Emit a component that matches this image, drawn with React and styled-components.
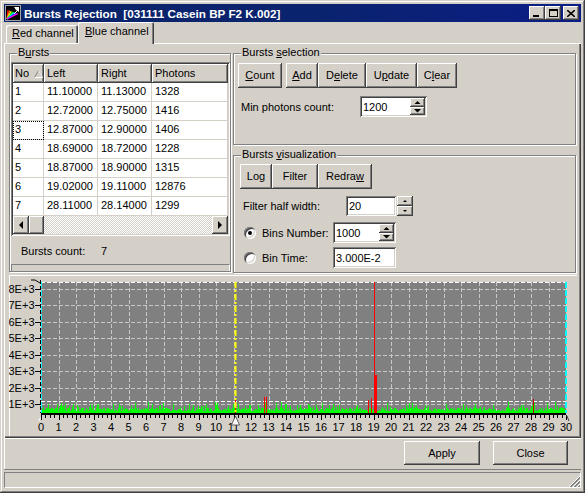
import React from "react";
import styled, { createGlobalStyle, css } from "styled-components";

const GlobalStyle = createGlobalStyle`
  html, body {
    margin: 0;
    padding: 0;
    background: #d4d0c8;
  }
  body {
    font-family: "Liberation Sans", Arial, sans-serif;
    font-size: 11px;
    color: #000;
  }
  * {
    box-sizing: border-box;
  }
`;

const raised = css`
  box-shadow: inset -1px -1px #404040, inset 1px 1px #fff, inset -2px -2px #808080;
`;

const sunken = css`
  box-shadow: inset 1px 1px #808080, inset -1px -1px #fff, inset 2px 2px #404040,
    inset -2px -2px #d4d0c8;
`;

const ROWS = [
  ["1", "11.10000", "11.13000", "1328"],
  ["2", "12.72000", "12.75000", "1416"],
  ["3", "12.87000", "12.90000", "1406"],
  ["4", "18.69000", "18.72000", "1228"],
  ["5", "18.87000", "18.90000", "1315"],
  ["6", "19.02000", "19.11000", "12876"],
  ["7", "28.11000", "28.14000", "1299"],
];

const COLS = [31, 54, 54, 76];

/* ---------- window chrome ---------- */

const Window = styled.div`
  width: 585px;
  height: 493px;
  padding: 4px;
  background: #d4d0c8;
  box-shadow: inset -1px -1px #404040, inset 1px 1px #d4d0c8, inset -2px -2px #808080,
    inset 2px 2px #fff;
  display: flex;
  flex-direction: column;
`;

const TitleBar = styled.div`
  height: 18px;
  flex: none;
  display: flex;
  align-items: center;
  padding: 0 2px 0 1px;
  background: linear-gradient(90deg, #0a246a 0%, #0a236e 55%, #0b1d86 100%);
`;

const Title = styled.span`
  flex: 1;
  margin-left: 3px;
  color: #fff;
  font-weight: bold;
  font-size: 11.7px;
  white-space: pre;
`;

const CaptionButton = styled.div`
  width: 16px;
  height: 14px;
  margin-left: ${(p) => (p.$gap ? "2px" : "0")};
  background: #d4d0c8;
  ${raised};
  display: flex;
  align-items: center;
  justify-content: center;
`;

const TabStrip = styled.div`
  height: 21px;
  flex: none;
  display: flex;
  align-items: flex-end;
  padding-left: 2px;
  position: relative;
  z-index: 1;
`;

const Tab = styled.div`
  width: ${(p) => p.$width}px;
  height: ${(p) => (p.$active ? 22 : 18)}px;
  margin-bottom: ${(p) => (p.$active ? "-1px" : "0")};
  padding-left: ${(p) => (p.$active ? 7 : 6)}px;
  padding-top: ${(p) => (p.$active ? 3 : 2)}px;
  background: #d4d0c8;
  border-radius: 2px 2px 0 0;
  box-shadow: inset 1px 1px #fff, inset -1px 0 #404040, inset -2px 0 #808080;
  line-height: 13px;
`;

const Sheet = styled.div`
  height: 395px;
  flex: none;
  padding: 10px 4px 2px 5px;
  box-shadow: inset 1px 1px #fff, inset -1px -1px #404040, inset -2px -2px #808080;
  display: flex;
  flex-direction: column;
`;

const TopRow = styled.div`
  display: flex;
  align-items: flex-start;
  gap: 2px;
  height: 220px;
`;

const RightCol = styled.div`
  display: flex;
  flex-direction: column;
  gap: 10px;
`;

/* ---------- group boxes ---------- */

const Group = styled.div`
  position: relative;
  width: ${(p) => p.$width}px;
  height: ${(p) => p.$height}px;
  border: 1px solid #808080;
  box-shadow: inset 1px 1px #fff, 1px 1px #fff;
  padding: ${(p) => p.$pad};
  display: flex;
  flex-direction: column;
`;

const Caption = styled.span`
  position: absolute;
  top: -8px;
  left: 7px;
  padding: 0 1px;
  line-height: 13px;
  background: #d4d0c8;
`;

/* ---------- list view ---------- */

const ListView = styled.div`
  width: 219px;
  height: 174px;
  padding: 2px;
  background: #fff;
  ${sunken};
  display: flex;
  flex-direction: column;
`;

const HeaderRow = styled.div`
  display: flex;
  height: 19px;
  flex: none;
`;

const HeaderCell = styled.div`
  width: ${(p) => p.$w}px;
  background: #d4d0c8;
  ${raised};
  padding-left: ${(p) => (p.$first ? 2 : 3)}px;
  display: flex;
  align-items: center;
  gap: 5px;
  line-height: 13px;
`;

const Row = styled.div`
  display: flex;
  height: 19px;
  flex: none;
`;

const Cell = styled.div`
  width: ${(p) => p.$w}px;
  border-bottom: 1px solid #d4d0c8;
  border-right: 1px solid #d4d0c8;
  padding-left: ${(p) => (p.$first ? 2 : 3)}px;
  padding-top: 2px;
  line-height: 13px;
  ${(p) =>
    p.$focus &&
    css`
      outline: 1px dotted #000;
      outline-offset: -1px;
    `}
`;

const HScroll = styled.div`
  height: 18px;
  flex: none;
  display: flex;
  background: repeating-conic-gradient(#fff 0 25%, #d4d0c8 0 50%) 0 0 / 2px 2px;
`;

const ScrollBtn = styled.div`
  width: ${(p) => p.$w || 16}px;
  height: 100%;
  background: #d4d0c8;
  ${raised};
  margin-left: ${(p) => (p.$push ? "auto" : "0")};
  display: flex;
  align-items: center;
  justify-content: center;
`;

const CountRow = styled.div`
  height: 28px;
  display: flex;
  align-items: center;
  padding: 1px 0 0 10px;
`;

const CountLabel = styled.span`
  width: 80px;
`;

const Strip = styled.div`
  width: 219px;
  height: 7px;
  border-top: 1px solid #808080;
  border-left: 1px solid #808080;
  border-right: 1px solid #fff;
`;

/* ---------- buttons and fields ---------- */

const ButtonRow = styled.div`
  display: flex;
  height: 25px;
`;

const Button = styled.div`
  width: ${(p) => p.$w}px;
  height: ${(p) => p.$h || 25}px;
  margin-right: ${(p) => p.$mr || 0}px;
  background: #d4d0c8;
  ${raised};
  display: flex;
  align-items: center;
  justify-content: center;
  padding-bottom: 1px;
`;

const FieldRow = styled.div`
  display: flex;
  align-items: center;
  height: ${(p) => p.$h || 21}px;
  margin-top: ${(p) => p.$mt}px;
  padding-left: ${(p) => p.$pl || 0}px;
`;

const FieldLabel = styled.span`
  width: ${(p) => p.$w}px;
  flex: none;
`;

const Edit = styled.div`
  width: ${(p) => p.$w}px;
  height: ${(p) => p.$h || 21}px;
  background: #fff;
  ${sunken};
  display: flex;
  align-items: center;
  padding: 0 2px 0 3px;
`;

const EditText = styled.span`
  flex: 1;
`;

const Spin = styled.div`
  width: 15px;
  height: 17px;
  display: flex;
  flex-direction: column;
`;

const SpinHalf = styled.div`
  flex: 1;
  background: #d4d0c8;
  ${raised};
  display: flex;
  align-items: center;
  justify-content: center;
`;

const UpDown = styled.div`
  width: 16px;
  height: 20px;
  margin-left: 1px;
  display: flex;
  flex-direction: column;
`;

const RadioWrap = styled.div`
  width: 89px;
  flex: none;
  display: flex;
  align-items: center;
  gap: 6px;
`;

const RadioDot = styled.span`
  width: 12px;
  height: 12px;
  border-radius: 50%;
  background: #fff;
  box-shadow: inset 1px 1px #808080, inset -1px -1px #fff, inset 2px 2px #404040,
    inset -2px -2px #d4d0c8;
  display: flex;
  align-items: center;
  justify-content: center;

  &::after {
    content: "";
    width: 4px;
    height: 4px;
    border-radius: 50%;
    background: ${(p) => (p.$checked ? "#000" : "transparent")};
  }
`;

/* ---------- chart ---------- */

const ChartBox = styled.div`
  margin-top: 2px;
  height: 161px;
  box-shadow: inset 1px 1px #fff;
`;

/* ---------- bottom ---------- */

const ButtonBar = styled.div`
  height: 31px;
  flex: none;
  display: flex;
  justify-content: flex-end;
  gap: 13px;
  padding: 3px 13px 0 0;
  box-shadow: inset 1px 1px #fff;
`;

const StatusBar = styled.div`
  flex: 1;
  border-top: 1px solid #808080;
  padding: 2px 0 1px 0;
  display: flex;
`;

const StatusPanel = styled.div`
  flex: 1;
  border: 1px solid;
  border-color: #808080 #fff #fff #808080;
  display: flex;
  justify-content: flex-end;
  align-items: flex-end;
`;

/* ---------- small drawings ---------- */

const Arrow = ({ dir, size = 4 }) => {
  const s = size;
  const pts = {
    up: `0,${s} ${s},0 ${2 * s},${s}`,
    down: `0,0 ${s},${s} ${2 * s},0`,
    left: `${s},0 0,${s} ${s},${2 * s}`,
    right: `0,0 ${s},${s} 0,${2 * s}`,
  }[dir];
  const horiz = dir === "up" || dir === "down";
  return (
    <svg width={horiz ? 2 * s : s} height={horiz ? s : 2 * s}>
      <polygon points={pts} fill="#000" />
    </svg>
  );
};

const AppIcon = () => (
  <svg width="16" height="16" viewBox="0 0 16 16">
    <rect x="0.5" y="0.5" width="15" height="15" fill="#000" stroke="#a0a0a0" />
    {["#ff0000", "#ff8000", "#ffff00", "#00ff00", "#00ffff", "#0040ff", "#ff00ff"].map((c, i) => (
      <line key={c} x1="2" y1="14" x2={3 + i * 1.6} y2={5 + i * 0.6} stroke={c} strokeWidth="1.3" />
    ))}
    <path d="M9 2 L14 2 L14 7 L11 5 Z" fill="#fff" />
    <line x1="9" y1="9" x2="14" y2="4" stroke="#fff" strokeWidth="1" />
  </svg>
);

const SizeGrip = () => (
  <svg width="12" height="12">
    {[0, 4, 8].map((o) => (
      <g key={o}>
        <line x1={12} y1={1 + o} x2={1 + o} y2={12} stroke="#fff" />
        <line x1={12} y1={2 + o} x2={2 + o} y2={12} stroke="#808080" />
        <line x1={12} y1={3 + o} x2={3 + o} y2={12} stroke="#808080" />
      </g>
    ))}
  </svg>
);

const BASE = 138;
const TOP = 7;
const LEFT = 32;
const RIGHT = 557;
const sx = (v) => LEFT + v * 17.5;
const labelY = (k) => 129.3 - (k - 1) * 16.47;

// noisy photon counts, one bar per pixel column
const histogram = (() => {
  const noise = (n) => {
    const v = Math.sin(n * 12.9898 + 78.233) * 43758.5453;
    return v - Math.floor(v);
  };
  let d = "";
  for (let i = 0; i < 525; i++) {
    let h = 2 + Math.floor(noise(i) * 4);
    if (noise(i + 1000) < 0.28) h += 1 + Math.floor(noise(i + 2000) * 6);
    d += `M${LEFT + i + 0.5} ${BASE}V${BASE - h}`;
  }
  return d;
})();

const bursts = [
  { x: 226, top: 123, color: "#ff0000" },
  { x: 255, top: 122, color: "#ff0000" },
  { x: 257, top: 122, color: "#ff0000" },
  { x: 359, top: 125, color: "#ff0000" },
  { x: 362, top: 123, color: "#ff0000" },
  { x: 365, top: TOP, color: "#ff0000" },
  { x: 366, top: 100, color: "#ff0000" },
  { x: 524, top: 124, color: "#c00000" },
];

const Chart = () => {
  const ticks = [];
  for (let i = 0; i <= 120; i++) {
    const x = Math.round(sx(i / 4)) + 0.5;
    ticks.push(<line key={i} x1={x} x2={x} y1={140} y2={i % 4 === 0 ? 145 : 143} stroke="#000" />);
  }
  return (
    <svg width="568" height="161" style={{ display: "block" }}>
      <rect x={LEFT} y={TOP} width={RIGHT - LEFT} height={BASE - TOP} fill="#808080" />
      {Array.from({ length: 29 }, (_, i) => {
        const x = Math.round(sx(i + 1)) + 0.5;
        return <line key={i} x1={x} x2={x} y1={TOP} y2={BASE} stroke="#c8c8c8" strokeDasharray="4 2" />;
      })}
      {Array.from({ length: 8 }, (_, i) => {
        const y = Math.round(labelY(i + 1)) + 0.5;
        return <line key={i} x1={LEFT} x2={RIGHT} y1={y} y2={y} stroke="#c8c8c8" strokeDasharray="4 2" />;
      })}
      <line x1={LEFT} x2={RIGHT} y1={TOP + 0.5} y2={TOP + 0.5} stroke="#fff" strokeDasharray="4 2" />
      <line x1={LEFT} x2={RIGHT} y1={126.5} y2={126.5} stroke="#fff" strokeDasharray="4 2" />
      <path d={histogram} stroke="#00ff00" strokeWidth="1" />
      {bursts.map((b, i) => (
        <rect key={i} x={b.x} y={b.top} width={i === 6 ? 2 : 1} height={BASE - b.top} fill={b.color} />
      ))}
      <line x1={226.5} x2={226.5} y1={TOP} y2={BASE} stroke="#ffff00" strokeWidth="2" strokeDasharray="6 2 2 2" />
      <line x1={RIGHT} x2={RIGHT} y1={TOP} y2={BASE} stroke="#00ffff" strokeWidth="2" strokeDasharray="6 2" />
      <line x1={LEFT + 0.5} x2={LEFT + 0.5} y1={TOP} y2={BASE} stroke="#00ffff" strokeDasharray="6 2" />
      <line x1={LEFT - 0.5} x2={LEFT - 0.5} y1={TOP - 2} y2={BASE} stroke="#000" strokeDasharray="4 2" />
      <polyline points={`${LEFT - 10},5 ${LEFT - 6},5 ${LEFT - 1},8`} fill="none" stroke="#000" />
      {Array.from({ length: 8 }, (_, i) => {
        const y = labelY(i + 1);
        return (
          <g key={i}>
            <line x1={26} x2={LEFT} y1={Math.round(y) + 0.5} y2={Math.round(y) + 0.5} stroke="#000" />
            <text x={25.5} y={y + 4} fontSize="11" textAnchor="end" fontFamily="Liberation Sans, Arial, sans-serif">
              {`${i + 1}E+3`}
            </text>
          </g>
        );
      })}
      <rect x={LEFT} y={BASE} width={RIGHT - LEFT} height={2} fill="#000" />
      {ticks}
      {Array.from({ length: 31 }, (_, i) => (
        <text key={i} x={sx(i)} y={156} fontSize="11" textAnchor="middle" fontFamily="Liberation Sans, Arial, sans-serif">
          {i}
        </text>
      ))}
      <polygon points="226.5,141 222.5,150 230.5,150" fill="#fff" stroke="#404040" strokeWidth="0.8" />
      <polyline points={`${LEFT - 2},146 ${LEFT - 2},144 ${LEFT},143`} fill="none" stroke="#fff" />
      <polyline points={`${RIGHT},141 ${RIGHT + 1},141 ${RIGHT + 3},146`} fill="none" stroke="#404040" />
    </svg>
  );
};

/* ---------- app ---------- */

const App = () => (
  <>
    <GlobalStyle />
    <Window>
      <TitleBar>
        <AppIcon />
        <Title>{"Bursts Rejection  [031111 Casein BP F2 K.002]"}</Title>
        <CaptionButton>
          <svg width="8" height="9">
            <rect x="0" y="6" width="6" height="2" fill="#000" />
          </svg>
        </CaptionButton>
        <CaptionButton>
          <svg width="9" height="9">
            <rect x="0.5" y="0.5" width="8" height="7" fill="none" stroke="#000" />
            <rect x="0" y="0" width="9" height="2" fill="#000" />
          </svg>
        </CaptionButton>
        <CaptionButton $gap>
          <svg width="8" height="7">
            <path d="M0 0 L8 7 M8 0 L0 7" stroke="#000" strokeWidth="1.6" />
          </svg>
        </CaptionButton>
      </TitleBar>

      <TabStrip>
        <Tab $width={72}>
          <u>R</u>ed channel
        </Tab>
        <Tab $width={76} $active>
          <u>B</u>lue channel
        </Tab>
      </TabStrip>

      <Sheet>
        <TopRow>
          <Group $width={222} $height={219} $pad="8px 0 0 1px">
            <Caption>
              B<u>u</u>rsts
            </Caption>
            <ListView>
              <HeaderRow>
                <HeaderCell $w={COLS[0]} $first>
                  No
                  <svg width="9" height="8">
                    <polygon points="4.5,0.5 0.5,7.5 8.5,7.5" fill="none" stroke="#808080" />
                    <line x1="4.5" y1="0.5" x2="8.5" y2="7.5" stroke="#fff" />
                    <line x1="0.5" y1="7.5" x2="8.5" y2="7.5" stroke="#fff" />
                  </svg>
                </HeaderCell>
                <HeaderCell $w={COLS[1]}>Left</HeaderCell>
                <HeaderCell $w={COLS[2]}>Right</HeaderCell>
                <HeaderCell $w={COLS[3]}>Photons</HeaderCell>
              </HeaderRow>
              {ROWS.map((r) => (
                <Row key={r[0]}>
                  {r.map((v, i) => (
                    <Cell key={i} $w={COLS[i]} $first={i === 0} $focus={i === 0 && r[0] === "3"}>
                      {v}
                    </Cell>
                  ))}
                </Row>
              ))}
              <HScroll>
                <ScrollBtn>
                  <Arrow dir="left" />
                </ScrollBtn>
                <ScrollBtn $w={15} />
                <ScrollBtn $push>
                  <Arrow dir="right" />
                </ScrollBtn>
              </HScroll>
            </ListView>
            <CountRow>
              <CountLabel>Bursts count:</CountLabel>7
            </CountRow>
            <Strip />
          </Group>

          <RightCol>
            <Group $width={343} $height={92} $pad="9px 0 0 4px">
              <Caption>
                Bursts <u>s</u>election
              </Caption>
              <ButtonRow>
                <Button $w={44} $mr={4}>
                  <span>
                    <u>C</u>ount
                  </span>
                </Button>
                <Button $w={32}>
                  <span>
                    <u>A</u>dd
                  </span>
                </Button>
                <Button $w={48}>
                  <span>
                    D<u>e</u>lete
                  </span>
                </Button>
                <Button $w={51}>
                  <span>
                    U<u>p</u>date
                  </span>
                </Button>
                <Button $w={40}>
                  <span>
                    C<u>l</u>ear
                  </span>
                </Button>
              </ButtonRow>
              <FieldRow $mt={8} $pl={3}>
                <FieldLabel $w={119}>Min photons count:</FieldLabel>
                <Edit $w={67}>
                  <EditText>1200</EditText>
                  <Spin>
                    <SpinHalf>
                      <Arrow dir="up" size={3.5} />
                    </SpinHalf>
                    <SpinHalf>
                      <Arrow dir="down" size={3.5} />
                    </SpinHalf>
                  </Spin>
                </Edit>
              </FieldRow>
            </Group>

            <Group $width={343} $height={118} $pad="8px 0 0 6px">
              <Caption>
                Bursts <u>v</u>isualization
              </Caption>
              <ButtonRow>
                <Button $w={32}>Log</Button>
                <Button $w={46}>Filter</Button>
                <Button $w={54}>
                  <span>
                    Redra<u>w</u>
                  </span>
                </Button>
              </ButtonRow>
              <FieldRow $mt={7} $h={20} $pl={3}>
                <FieldLabel $w={103}>Filter half width:</FieldLabel>
                <Edit $w={50} $h={20}>
                  <EditText>20</EditText>
                </Edit>
                <UpDown>
                  <SpinHalf>
                    <Arrow dir="up" size={2} />
                  </SpinHalf>
                  <SpinHalf>
                    <Arrow dir="down" size={2} />
                  </SpinHalf>
                </UpDown>
              </FieldRow>
              <FieldRow $mt={6} $pl={4}>
                <RadioWrap>
                  <RadioDot $checked />
                  Bins Number:
                </RadioWrap>
                <Edit $w={63}>
                  <EditText>1000</EditText>
                  <Spin>
                    <SpinHalf>
                      <Arrow dir="up" size={3.5} />
                    </SpinHalf>
                    <SpinHalf>
                      <Arrow dir="down" size={3.5} />
                    </SpinHalf>
                  </Spin>
                </Edit>
              </FieldRow>
              <FieldRow $mt={4} $pl={4}>
                <RadioWrap>
                  <RadioDot />
                  Bin Time:
                </RadioWrap>
                <Edit $w={63}>
                  <EditText>3.000E-2</EditText>
                </Edit>
              </FieldRow>
            </Group>
          </RightCol>
        </TopRow>

        <ChartBox>
          <Chart />
        </ChartBox>
      </Sheet>

      <ButtonBar>
        <Button $w={76} $h={24}>
          Apply
        </Button>
        <Button $w={75} $h={24}>
          Close
        </Button>
      </ButtonBar>

      <StatusBar>
        <StatusPanel>
          <SizeGrip />
        </StatusPanel>
      </StatusBar>
    </Window>
  </>
);

export default App;
